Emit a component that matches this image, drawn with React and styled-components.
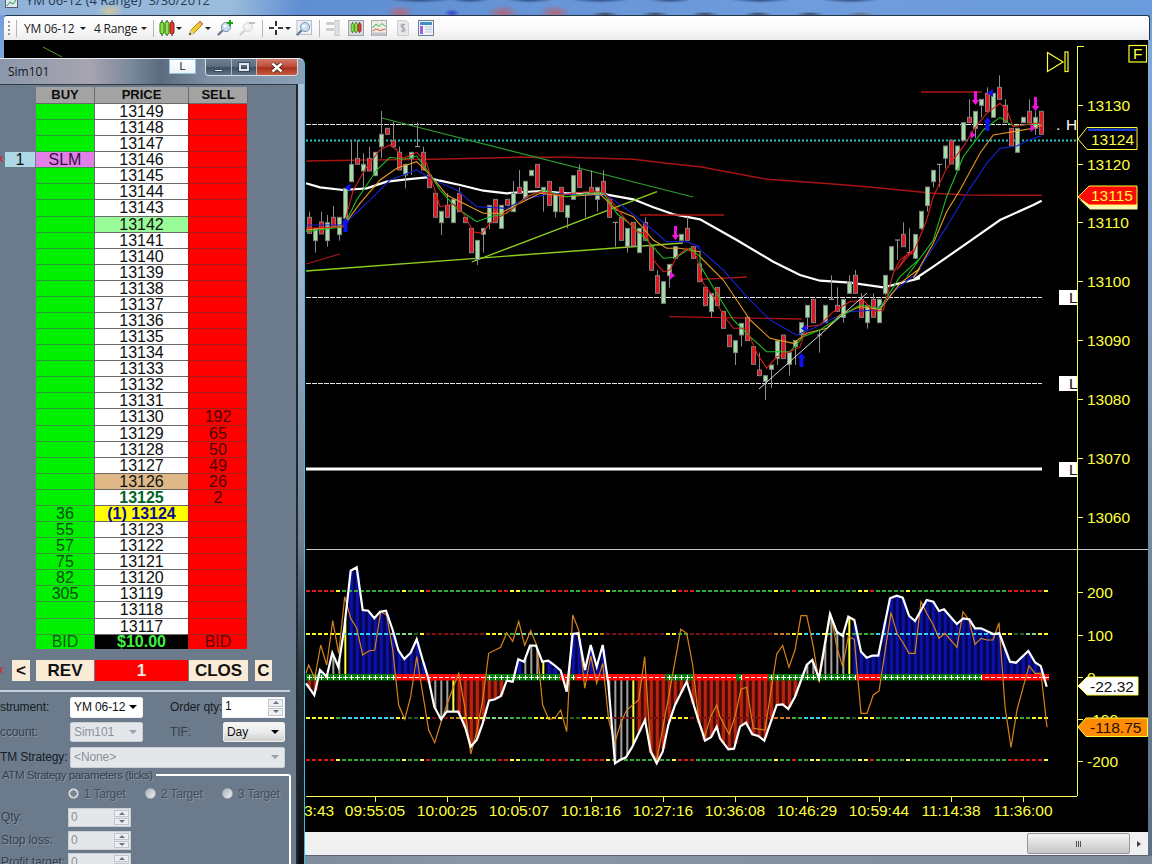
import React from 'react';
import styled, { createGlobalStyle } from 'styled-components';

const Global = createGlobalStyle`
  html, body { margin: 0; padding: 0; background: #000; }
  body { font-family: "Liberation Sans", Arial, sans-serif; }
`;

/* ---------- chart data (traced) ---------- */
const Z3 = [
  ['r',352,400,335,400],['g',386,422,386,458],['r',366,402,335,402],['g',368,422,345,440],['r',352,380,318,380],['g',352,404,352,422],
  ['g',265,355],['g',193,245,120,245],['r',175,193,120,193],['g',193,213,160,265],['r',175,213,140,213],['g',157,227,157,227],
  ['g',103,140,33,175],['r',85,103,85,103],['r',122,140,65,140],['r',157,210,140,210],['g',193,225,193,265],['g',157,175,157,225],
  ['d',140,140,67,140],['r',157,210,140,210],['r',225,263],['r',280,352],['g',334,368,334,405],['r',316,352,280,352],
  ['g',298,368],['r',280,335,262,335],['r',352,368],['r',385,458],['g',421,478,421,495],['g',385,403,385,458],
  ['g',316,368,316,388],['r',298,368],['g',316,385],['r',298,316],['g',280,335,243,335],['r',262,280,210,280],
  ['g',244,298],['g',211,227],['r',193,262],['g',262,280,262,335],['r',244,316],['g',280,335,280,352],
  ['r',262,335],['g',316,352,316,385],['g',227,298],['r',211,262,193,262],['d',280,280,280,352],['r',262,280,211,280],
  ['g',262,298,262,335],['r',244,280,211,280],['r',298,352],['d',367,367,367,440],['r',352,421],['g',385,440,385,458],
  ['r',367,437],['g',385,458],['r',367,421,352,421],['r',440,511],['r',527,580,511,580],['g',545,610],
  ['g',493,527,493,563],['g',440,475],['g',403,421],['r',385,421,350,421],['r',440,475],
];
const Z5 = [
  ['r',72,125],['r',142,197],['g',160,215,160,232],['r',142,197],['r',214,265],['r',285,320],['g',302,338,302,375],
  ['g',250,285,250,320],['r',232,302],['r',320,373],['r',390,407,338,407],['g',407,424,407,480],['g',375,388,388,444],
  ['g',302,356,302,375],['r',285,356],['g',338,373,338,407],['g',302,320,302,375],['g',248,284,248,290],['g',196,232,196,268],
  ['r',178,248],['d',285,285,270,338],['g',196,248],['d',178,178,106,178],['r',196,214,142,214],['g',178,232,178,248],
  ['g',125,160,106,160],['r',106,160,90,160],['r',178,232,160,232],['g',196,248,196,266],['r',178,232,160,232],['g',178,248],['g',106,160,106,165],
];
const Z4 = [
  ['g',620,690,620,690],['d',600,600,600,660],['r',583,620,547,620],['d',638,638,565,638],['g',583,655],['g',514,565,514,570],
  ['g',441,497,441,515],['g',391,425,391,442],['d',373,373,373,440],['g',318,355,318,385],['r',301,372],['g',318,390],
  ['g',248,301],['r',232,248,178,248],['g',214,265,214,295],['g',178,196,178,232],['r',160,214,142,214],['g',160,232],
  ['r',142,178,106,178],['r',196,247,178,247],['r',265,318],['g',265,337],['g',232,248],['r',214,248,178,248],
  ['g',232,265,214,285],['r',214,283],
];
const map3 = y => 100 + y / 3;
const map5 = y => 240 + y / 3;
const map4 = y => 40 + y / 3;
const toCandles = (rows, fy) => rows.map(([t, a, b, wt, wb]) => ({
  t, top: fy(a), bot: fy(b), wt: fy(wt === undefined ? a : wt), wb: fy(wb === undefined ? b : wb),
}));
const CANDLES = [...toCandles(Z3, map3), ...toCandles(Z5, map5), ...toCandles(Z4, map4)];
const candleX = i => 309.33 + 6 * i;

const trace = (segments) => segments.flatMap(([ox, oy, pts]) => pts.map(([x, y]) => [ox + x / 3, oy + y / 3]));
const toPath = pts => pts.map(p => `${p[0].toFixed(1)},${p[1].toFixed(1)}`).join(' ');

const SMA = trace([
  [300,100,[[18,250],[60,262],[130,270],[200,265],[260,245],[320,238],[380,232],[420,242],[480,255],[550,272],[620,280],[720,273],[800,280],[900,280],[1000,298],[1060,322],[1120,343],[1200,358]]],
  [600,240,[[410,0],[520,65],[600,105],[660,122],[750,128],[850,142],[960,115]]],
  [700,40,[[640,720],[700,680],[800,610],[900,540],[1000,495],[1025,482]]],
]);
const DARKRED = trace([
  [300,100,[[18,183],[200,180],[400,178],[650,172],[800,172],[1000,178],[1100,190],[1200,200]]],
  [700,40,[[200,418],[400,432],[500,440],[600,450],[700,460],[800,465],[1025,466]]],
]);
const MA_RED = trace([
  [300,100,[[18,385],[130,380],[160,270],[200,200],[240,150],[270,135],[290,150],[310,175],[350,157],[380,190],[395,240],[420,320],[460,312],[490,340],[520,395],[545,400],[570,370],[600,350],[640,325],[680,290],[720,275],[780,285],[820,280],[860,275],[910,275],[940,310],[970,350],[1010,395],[1040,400],[1060,480],[1090,515],[1110,510],[1130,470],[1160,445],[1190,470]]],
  [600,240,[[290,50],[310,130],[340,170],[370,225],[400,265],[440,265],[470,340],[500,385],[530,350],[560,340],[600,320],[620,260],[660,255],[700,215],[750,185],[790,180],[820,215],[850,210],[880,100],[900,60],[940,30]]],
  [700,40,[[590,690],[620,645],[640,640],[680,540],[700,470],[740,385],[790,320],[820,270],[860,220],[900,190],[920,210],[940,260],[1000,250],[1025,250]]],
]);
const MA_GREEN = trace([
  [300,100,[[18,395],[130,380],[170,300],[230,210],[270,172],[310,178],[350,168],[385,215],[420,270],[470,325],[530,365],[570,350],[620,340],[680,290],[730,270],[800,290],[860,280],[910,278],[950,340],[1000,380],[1050,430],[1090,475],[1130,472],[1170,445],[1200,470]]],
  [600,240,[[300,75],[350,160],[400,240],[450,290],[500,335],[570,335],[610,290],[660,270],[720,230],[780,195],[840,205],[900,110],[960,55]]],
  [700,40,[[620,710],[700,600],[740,470],[790,350],[850,270],[900,232],[940,258],[1025,250]]],
]);
const MA_ORANGE = trace([
  [300,100,[[18,390],[130,378],[180,310],[240,240],[290,205],[350,185],[395,230],[440,285],[500,315],[550,340],[600,340],[660,310],[720,280],[800,290],[900,282],[950,330],[1000,350],[1060,420],[1100,445],[1140,445],[1200,455]]],
  [600,240,[[300,50],[370,120],[410,180],[450,240],[510,295],[580,310],[620,280],[680,265],[720,225],[780,200],[840,208],[900,130],[960,85]]],
  [700,40,[[640,715],[700,610],[740,515],[780,450],[840,340],[880,285],[920,278],[1000,265],[1025,255]]],
]);
const MA_BLUE = trace([
  [300,100,[[18,375],[130,375],[200,310],[270,240],[350,210],[400,240],[470,270],[530,320],[620,325],[680,295],[760,280],[830,285],[920,285],[970,320],[1040,375],[1100,425],[1160,425],[1200,440]]],
  [600,240,[[290,20],[370,90],[440,170],[510,240],[590,285],[640,265],[700,235],[750,215],[830,210],[880,155],[950,100]]],
  [700,40,[[640,715],[740,560],[800,460],[860,370],[900,325],[950,318],[1000,295],[1025,288]]],
]);
const OSC = trace([
  [300,550,[[18,400],[43,435],[60,360],[80,380],[97,308],[115,350],[132,240],[152,62],[170,52],[188,180],[205,182],[223,205],[240,185],[258,182],[278,240],[295,300],[313,327],[332,308],[350,268],[368,330],[385,385],[403,470],[423,508],[440,485],[475,485],[495,530],[512,590],[530,570],[548,520],[567,452],[585,448],[603,438],[620,392],[638,395],[655,328],[672,335],[690,287],[708,287],[727,335],[745,332],[763,345],[782,362],[800,425],[818,252],[835,250],[855,360],[872,285],[890,350],[908,285],[925,400],[945,640],[960,630],[978,622],[997,590],[1035,510],[1052,605],[1070,640],[1088,605],[1105,525],[1125,465],[1160,395],[1195,510],[1215,572],[1233,562],[1250,530]]],
  [720,550,[[0,565],[25,598],[42,596],[60,530],[78,518],[97,553],[115,558],[133,572],[170,465],[188,463],[205,477],[225,440],[260,345],[277,330],[297,385],[330,192],[350,245],[368,258],[385,200],[403,210],[423,305],[440,323],[457,317],[475,317],[510,145],[530,137],[548,143],[567,197],[585,213],[620,150],[640,155],[657,183],[672,178],[710,222],[730,205],[748,208],[765,235],[783,235],[820,252],[838,250],[870,335],[888,338],[925,303],[945,337],[962,348],[980,410]]],
]);
const OSC_SLOW = trace([
  [300,550,[[18,370],[26,345],[44,385],[62,285],[80,345],[98,212],[116,310],[134,140],[152,205],[170,235],[188,315],[206,303],[224,300],[242,185],[260,195],[278,300],[296,465],[314,508],[332,440],[350,320],[368,430],[386,540],[404,578],[422,520],[440,465],[476,370],[494,470],[512,612],[530,545],[548,450],[566,310],[602,292],[620,248],[638,274],[656,214],[674,286],[692,242],[710,286],[728,465],[746,508],[764,505],[782,480],[800,545],[818,195],[836,240],[854,415],[872,318],[890,400],[908,340],[926,510],[944,580],[962,520],[980,480],[1016,450],[1034,320],[1052,600],[1070,630],[1106,440],[1142,238],[1160,250],[1178,345],[1196,510],[1214,560],[1232,500],[1250,465]]],
  [720,550,[[0,500],[27,553],[45,500],[63,418],[80,412],[100,535],[135,540],[170,312],[188,287],[207,352],[225,300],[243,197],[260,197],[280,290],[297,397],[332,190],[350,290],[368,350],[385,260],[403,268],[423,490],[441,490],[460,435],[477,423],[513,188],[531,250],[549,278],[567,310],[585,310],[603,155],[620,190],[640,225],[657,265],[675,250],[711,292],[729,185],[747,210],[765,283],[783,265],[801,270],[819,270],[837,218],[855,470],[873,592],[891,480],[927,347],[945,370],[963,370],[981,532]]],
]);
const interpY = (pts, x) => {
  for (let i = 1; i < pts.length; i++) {
    if (x <= pts[i][0]) {
      const [x0, y0] = pts[i - 1]; const [x1, y1] = pts[i];
      return y0 + (y1 - y0) * ((x - x0) / (x1 - x0 || 1));
    }
  }
  return pts[pts.length - 1][1];
};
const ZONES = [[306,327,'red'],[327,340,'gray'],[340,348,'yellow'],[348,430,'blue'],[430,450,'gray'],[450,455,'yellow'],[455,520,'red'],[520,540,'gray'],[540,545,'yellow'],[545,608,'blue'],[608,630,'gray'],[630,635,'yellow'],[635,806,'red'],[806,847,'gray'],[847,851,'yellow'],[851,1046,'blue']];
const BAR = {
  red: { c: '#b8250f', back: '#4d0d06', w: 3 }, blue: { c: '#0c12a8', back: '#04065a', w: 3 },
  gray: { c: '#a0a0a0', back: 'none', w: 2 }, yellow: { c: '#ffff40', back: 'none', w: 2 },
};
const ZERO_Y = 677;
const BARS = [];
for (let i = 0; i <= 123; i++) {
  const x = candleX(i);
  const z = ZONES.find(r => x >= r[0] && x < r[1]);
  if (!z) continue;
  const y = interpY(OSC, x);
  let kind = z[2];
  if (kind === 'blue' && y > ZERO_Y) kind = 'red';
  if (kind === 'red' && y < ZERO_Y) kind = 'blue';
  BARS.push({ x, y, kind });
}

const C = { dr: '#7a1010', r: '#d81c1c', y: '#ffff30', g: '#2fae3a', lg: '#7fd88a', dg: '#1c5f20', c: '#38d0e8', o: '#d07a20' };
const RUN200 = [[335,'r'],[341,'y'],[402,'g'],[408,'y'],[420,'g'],[426,'y'],[431,'r'],[498,'g'],[510,'r'],[522,'y'],[545,'g'],[570,'r'],[582,'g'],[606,'r'],[612,'y'],[672,'g'],[678,'y'],[696,'r'],[774,'g'],[780,'y'],[792,'g'],[797,'r'],[810,'g'],[822,'y'],[858,'g'],[870,'y'],[876,'r'],[906,'g'],[912,'y'],[1007,'g'],[1044,'r'],[1050,'y']];
const RUN100 = [[342,'y'],[390,'c'],[413,'lg'],[418,'dg'],[425,'y'],[485,'dr'],[500,'y'],[512,'g'],[540,'lg'],[600,'y'],[605,'o'],[666,'dr'],[676,'y'],[686,'g'],[774,'dr'],[792,'o'],[803,'y'],[817,'c'],[826,'y'],[844,'lg'],[851,'y'],[876,'g'],[1000,'c'],[1013,'y'],[1025,'dg'],[1036,'lg'],[1050,'y']];
const RUN100N = [[335,'y'],[342,'g'],[395,'c'],[407,'y'],[418,'dg'],[428,'y'],[450,'dr'],[460,'o'],[485,'y'],[508,'lg'],[533,'g'],[563,'y'],[577,'dg'],[607,'y'],[667,'dr'],[690,'y'],[774,'dr'],[792,'o'],[803,'g'],[817,'c'],[827,'y'],[850,'g'],[858,'dg'],[873,'y'],[900,'g'],[1007,'c'],[1015,'y'],[1027,'g'],[1050,'y']];
const ZERO_RUNS = [[306,395,'g'],[395,485,'r'],[485,560,'g'],[560,567,'r'],[567,575,'g'],[575,665,'r'],[665,693,'g'],[693,736,'r'],[736,742,'g'],[742,768,'r'],[768,856,'g'],[856,880,'r'],[880,982,'g'],[982,1049,'r']];

const PRICE_TICKS = [[13130,105],[13120,164],[13110,222],[13100,281],[13090,340],[13080,399],[13070,458],[13060,517]];
const OSC_TICKS = [['200',592],['100',635],['0',677],['-100',719],['-200',761]];
const TIME_TICKS = [['09:55:05',375],['10:00:25',447],['10:05:07',519],['10:18:16',591],['10:27:16',663],['10:36:08',735],['10:46:29',807],['10:59:44',879],['11:14:38',951],['11:36:00',1023]];

/* ---------- chart drawing ---------- */
const ChartText = styled.text`
  font-family: "Liberation Sans", Arial, sans-serif;
  font-size: 15.5px;
  fill: ${p => p.$fill || '#ffff3c'};
`;
const DashRuns = ({ y, runs }) => {
  const out = [];
  for (let x = 306; x < 1048; x += 6) {
    const r = runs.find(q => x < q[0]);
    if (r) out.push(<rect key={x} x={x} y={y - 1} width={4} height={2} fill={C[r[1]]} />);
  }
  return <g>{out}</g>;
};
const DownArrow = ({ x, y, color }) => (
  <polygon points={`${x-1.5},${y} ${x+1.5},${y} ${x+1.5},${y+9} ${x+4},${y+9} ${x},${y+14} ${x-4},${y+9} ${x-1.5},${y+9}`} fill={color} />
);
const UpArrow = ({ x, y, color }) => (
  <polygon points={`${x},${y} ${x+4},${y+5} ${x+2},${y+5} ${x+2},${y+14} ${x-2},${y+14} ${x-2},${y+5} ${x-4},${y+5}`} fill={color} />
);
const TriRight = ({ x, y, color }) => <polygon points={`${x-2},${y-4} ${x+3},${y} ${x-2},${y+4}`} fill={color} />;
const TriLeft = ({ x, y, color }) => <polygon points={`${x+3},${y-4} ${x-3},${y} ${x+3},${y+4}`} fill={color} />;

const ChartSvg = styled.svg`
  display: block;
  width: 1144px;
  height: 792px;
  background: #000;
`;

const Chart = () => (
  <ChartSvg viewBox="4 40 1144 792">
    <line x1="43" y1="47" x2="62" y2="57" stroke="#4f9a1e" />
    {/* horizontal levels */}
    <line x1="306" y1="124.5" x2="1042" y2="124.5" stroke="#e6e6e6" strokeDasharray="5 1" />
    <line x1="306" y1="297.5" x2="1042" y2="297.5" stroke="#e6e6e6" strokeDasharray="5 1" />
    <line x1="306" y1="383.5" x2="1042" y2="383.5" stroke="#e6e6e6" strokeDasharray="5 1" />
    <line x1="306" y1="469" x2="1042" y2="469" stroke="#fff" strokeWidth="3" />
    <line x1="306" y1="140.5" x2="1077" y2="140.5" stroke="#25c8c8" strokeWidth="2" strokeDasharray="2 2" />
    {/* averages behind */}
    <polyline points={toPath(DARKRED)} fill="none" stroke="#a81414" strokeWidth="1.4" />
    <polyline points={toPath(SMA)} fill="none" stroke="#fff" strokeWidth="2.2" />
    {/* drawn objects */}
    <line x1="381.7" y1="118" x2="693" y2="197" stroke="#2d9c2d" strokeWidth="1.2" />
    <line x1="306" y1="271" x2="683" y2="243" stroke="#8fce1e" strokeWidth="1.3" />
    <line x1="471.7" y1="262" x2="657" y2="191.7" stroke="#8fce1e" strokeWidth="1.3" />
    <line x1="306" y1="264" x2="340" y2="254" stroke="#a81414" strokeWidth="1.3" />
    <line x1="640" y1="215" x2="724" y2="215" stroke="#b01414" strokeWidth="1.3" />
    <line x1="701.7" y1="279.3" x2="747" y2="277" stroke="#b01414" strokeWidth="1.3" />
    <line x1="669" y1="316.7" x2="802" y2="319" stroke="#b01414" strokeWidth="1.3" />
    <line x1="921" y1="92" x2="982" y2="92" stroke="#b01414" strokeWidth="1.3" />
    {/* candles */}
    {CANDLES.map((c, i) => {
      const x = Math.round(candleX(i));
      return (
        <g key={i}>
          <line x1={x + .5} y1={c.wt} x2={x + .5} y2={c.wb} stroke="#8a8a8a" />
          {c.t === 'd'
            ? <line x1={x - 2} y1={c.top} x2={x + 3} y2={c.top} stroke="#b0b0b0" />
            : <rect x={x - 1.5} y={c.top} width={4} height={c.bot - c.top} fill={c.t === 'g' ? '#a4dea4' : '#e2161c'} stroke="#7f7f7f" strokeWidth="1" />}
        </g>
      );
    })}
    <polyline points={toPath(MA_BLUE)} fill="none" stroke="#1420c8" strokeWidth="1.2" />
    <polyline points={toPath(MA_ORANGE)} fill="none" stroke="#e89a20" strokeWidth="1.1" />
    <polyline points={toPath(MA_GREEN)} fill="none" stroke="#1ebe1e" strokeWidth="1.1" />
    <polyline points={toPath(MA_RED)} fill="none" stroke="#d81e1e" strokeWidth="1.1" />
    <line x1="759" y1="389" x2="867" y2="293" stroke="#d8d8d8" strokeWidth="1" />
    {/* markers */}
    <UpArrow x={345.5} y={218} color="#1010f0" />
    <TriLeft x={347.5} y={187.5} color="#1010f0" />
    <DownArrow x={675.5} y={226} color="#f010e0" />
    <TriRight x={672} y={275.5} color="#f010e0" />
    <UpArrow x={801.5} y={353} color="#1010f0" />
    <TriLeft x={804} y={328.5} color="#1010f0" />
    <DownArrow x={975.5} y={91} color="#f010e0" />
    <DownArrow x={1035.5} y={97} color="#f010e0" />
    <UpArrow x={987.5} y={117} color="#1010f0" />
    <TriLeft x={990} y={93} color="#1010f0" />
    <TriRight x={972.5} y={135} color="#f010e0" />
    <TriRight x={1032.5} y={128} color="#f010e0" />
    {/* replay + F box */}
    <polygon points="1047.5,52.5 1063,62 1047.5,71.5" fill="none" stroke="#ffff30" strokeWidth="1.2" />
    <rect x="1065" y="52" width="3" height="19.5" fill="none" stroke="#ffff30" strokeWidth="1.2" />
    <rect x="1129" y="45.5" width="17.5" height="16.5" fill="none" stroke="#ffff30" strokeWidth="1.2" />
    <ChartText x="1133" y="59">F</ChartText>
    {/* price axis */}
    <line x1="1077.5" y1="46" x2="1077.5" y2="796" stroke="#ffff50" />
    <line x1="1077" y1="46.5" x2="1084" y2="46.5" stroke="#ffff50" />
    {PRICE_TICKS.map(([v, y]) => (
      <g key={v}>
        <line x1="1077" y1={y + .5} x2="1083" y2={y + .5} stroke="#ffff50" />
        <ChartText x="1087" y={y + 5.5}>{v}</ChartText>
      </g>
    ))}
    {/* level tags */}
    <ChartText x="1056" y="130" $fill="#fff">.</ChartText>
    <ChartText x="1066" y="130" $fill="#fff">H</ChartText>
    {[290, 376, 462].map(y => (
      <g key={y}>
        <rect x="1059" y={y} width="18" height="15" fill="#fff" />
        <ChartText x="1069" y={y + 13} $fill="#111">L</ChartText>
      </g>
    ))}
    {/* price flags */}
    <polygon points="1078,139 1087,127.5 1137,127.5 1137,149.5 1087,149.5" fill="#000" stroke="#ffff40" />
    <rect x="1088" y="128.5" width="48" height="2.5" fill="#1c3cd0" />
    <ChartText x="1091" y="145">13124</ChartText>
    <polygon points="1079,199 1090,209.5 1137.5,209.5 1137.5,204 1090,204" fill="#fdf8b0" />
    <polygon points="1078,197 1089,186 1137,186 1137,205 1089,205" fill="#ff0808" stroke="#ffff40" />
    <ChartText x="1091" y="201">13115</ChartText>
    {/* pane divider */}
    <line x1="306" y1="549.5" x2="1148" y2="549.5" stroke="#c8c8c8" />
    {/* oscillator */}
    {BARS.map((b, i) => {
      const s = BAR[b.kind];
      const top = Math.min(b.y, ZERO_Y); const h = Math.abs(b.y - ZERO_Y);
      return (
        <g key={i}>
          {s.back !== 'none' && <rect x={b.x - 3} y={top} width={6} height={h} fill={s.back} />}
          <rect x={b.x - s.w / 2} y={top} width={s.w} height={h} fill={s.c} />
        </g>
      );
    })}
    <DashRuns y={591} runs={RUN200} />
    <DashRuns y={634} runs={RUN100} />
    <DashRuns y={718} runs={RUN100N} />
    <DashRuns y={760} runs={RUN200} />
    {ZERO_RUNS.map(([a, b, k]) => {
      const marks = [];
      for (let x = 306; x < b; x += 6) {
        if (x < a) continue;
        marks.push(k === 'g'
          ? <path key={x} d={`M${x + 1} 677.5H${x + 6}M${x + 3.5} 675V680`} stroke="#fff" strokeWidth="1" fill="none" />
          : <line key={x} x1={x + 1} y1="677.5" x2={x + 5} y2="677.5" stroke="#fff" />);
      }
      return (
        <g key={a}>
          <rect x={a} y="674" width={b - a} height="6.5" fill={k === 'g' ? '#0a7a0a' : '#ff0606'} />
          {marks}
        </g>
      );
    })}
    <polyline points={toPath(OSC_SLOW)} fill="none" stroke="#d9821a" strokeWidth="1.2" />
    <polyline points={toPath(OSC)} fill="none" stroke="#fff" strokeWidth="2.2" />
    {OSC_TICKS.map(([v, y]) => (
      <g key={v}>
        <line x1="1077" y1={y + .5} x2="1083" y2={y + .5} stroke="#ffff50" />
        <ChartText x="1087" y={y + 5.5}>{v}</ChartText>
      </g>
    ))}
    <polygon points="1078,686 1087,677 1138,677 1138,695 1087,695" fill="#fff" stroke="#ffff40" />
    <ChartText x="1090" y="691.5" $fill="#111">-22.32</ChartText>
    <polygon points="1078,727 1086,718 1147.5,718 1147.5,736.5 1086,736.5" fill="#ff8c00" stroke="#ffff40" />
    <ChartText x="1090" y="732.5" $fill="#1c1000">-118.75</ChartText>
    {/* time axis */}
    <line x1="306" y1="796.5" x2="1077" y2="796.5" stroke="#ffff50" />
    <ChartText x="304" y="816">3:43</ChartText>
    {TIME_TICKS.map(([t, x]) => (
      <g key={t}>
        <line x1={x + .5} y1="796" x2={x + .5} y2="802" stroke="#ffff50" />
        <ChartText x={x} y="816" textAnchor="middle">{t}</ChartText>
      </g>
    ))}
  </ChartSvg>
);

/* ---------- page frame ---------- */
const Page = styled.div`
  width: 1152px;
  height: 864px;
  position: relative;
  overflow: hidden;
  display: grid;
  grid-template-rows: 15px 25px 792px 24px 8px;
  background: linear-gradient(#6f9bd6, #7fa8de 60px, #7f96b0 400px, #5d6e80);
`;
const TitleBar = styled.div`
  display: flex;
  align-items: flex-start;
  gap: 8px;
  padding-left: 5px;
  overflow: hidden;
  background:
    radial-gradient(ellipse 34px 3px at 420px 0, #2f4f84, transparent),
    radial-gradient(ellipse 20px 3px at 470px 0, #2f4f84, transparent),
    radial-gradient(ellipse 24px 3px at 530px 0, #2f4f84, transparent),
    radial-gradient(ellipse 30px 3px at 600px 0, #2f4f84, transparent),
    radial-gradient(ellipse 22px 3px at 670px 0, #2f4f84, transparent),
    radial-gradient(ellipse 30px 3px at 760px 0, #2f4f84, transparent),
    radial-gradient(ellipse 30px 3px at 850px 0, #2f4f84, transparent),
    radial-gradient(ellipse 14px 8px at 400px 13px, #b06878, transparent),
    radial-gradient(ellipse 16px 8px at 503px 13px, #b06878, transparent),
    radial-gradient(ellipse 16px 8px at 555px 13px, #b06878, transparent),
    radial-gradient(ellipse 8px 4px at 452px 13px, #3040d0, transparent),
    radial-gradient(ellipse 14px 2px at 605px 14px, #3a4658, transparent),
    radial-gradient(ellipse 14px 2px at 655px 14px, #3a4658, transparent),
    radial-gradient(ellipse 14px 2px at 705px 14px, #3a4658, transparent),
    radial-gradient(ellipse 14px 2px at 758px 14px, #3a4658, transparent),
    radial-gradient(ellipse 14px 2px at 810px 14px, #3a4658, transparent),
    radial-gradient(ellipse 14px 2px at 860px 14px, #66707e, transparent),
    radial-gradient(ellipse 14px 8px at 110px 11px, #d0c8a0, transparent),
    linear-gradient(90deg, #8fb0d8 0, #9cbcdc 230px, #5f8ed2 300px, #6f9cdc 800px, #6a9bdc 100%),
    #6f9cd8;
`;
const TitleIcon = styled.svg`
  width: 13px;
  height: 8px;
  flex: none;
`;
const TitleText = styled.span`
  font-family: "Open Sans", sans-serif;
  font-size: 13px;
  line-height: 14px;
  margin-top: -7px;
  color: #25384e;
  white-space: pre;
`;
const ToolbarRow = styled.div`
  margin: 0 2px 0 4px;
  display: flex;
  align-items: center;
  background: linear-gradient(#ffffff, #fafafa 50%, #ececec);
  border-top: 1px solid #26364a;
  border-right: 1px solid #26364a;
  border-radius: 3px 3px 0 0;
  box-sizing: border-box;
`;
const Grip = styled.span`
  width: 2px;
  height: 15px;
  margin-left: 4px;
  background: repeating-linear-gradient(#9a9a9a 0 2px, transparent 2px 4px);
`;
const Sep = styled.span`
  width: 1px;
  height: 17px;
  background: #b5b5b5;
  margin-left: ${p => p.$ml}px;
`;
const ToolText = styled.span`
  font-family: "Open Sans", sans-serif;
  font-size: 12px;
  letter-spacing: -0.2px;
  color: #1b1b1b;
  margin-left: ${p => p.$ml}px;
  width: ${p => p.$w}px;
  white-space: nowrap;
`;
const Caret = styled.span`
  width: 0;
  height: 0;
  margin-left: ${p => p.$ml}px;
  border: 3px solid transparent;
  border-top: 3px solid #222;
  border-bottom: 0;
`;
const ToolIcon = styled.svg`
  width: ${p => p.$w || 16}px;
  height: 16px;
  margin-left: ${p => p.$ml}px;
  flex: none;
`;
const ChartRow = styled.div`
  padding: 0 4px;
`;
const ScrollRow = styled.div`
  margin: 0 4px;
  display: flex;
  align-items: stretch;
  justify-content: flex-end;
  background: #f0f0f0;
  border-bottom: 1px solid #5a6470;
  box-sizing: border-box;
`;
const ScrollThumb = styled.div`
  width: 103px;
  margin: 1px 0;
  box-sizing: border-box;
  border: 1px solid #9a9a9a;
  border-radius: 2px;
  background: linear-gradient(#f4f4f4, #dcdcdc 50%, #c6c6c6);
  display: flex;
  align-items: center;
  justify-content: center;
  gap: 1px;
`;
const ThumbMark = styled.span`
  width: 1px;
  height: 6px;
  background: #555;
`;
const ScrollArrow = styled.div`
  width: 18px;
  display: flex;
  align-items: center;
  justify-content: center;
  &::before {
    content: "";
    border: 3px solid transparent;
    border-left: 4px solid #444;
    border-right: 0;
  }
`;
const BottomFrame = styled.div`
  background: linear-gradient(90deg, #6d7a88, #8a96a6 40%, #7f8c9c);
`;

/* ---------- floating DOM window ---------- */
const DomWindow = styled.div`
  position: absolute;
  left: 0;
  top: 58px;
  width: 305px;
  height: 806px;
  box-sizing: border-box;
  border-top: 1px solid #e8eef4;
  border-radius: 0 6px 0 0;
  border-right: 1px solid #30c0e0;
  overflow: hidden;
  display: flex;
  flex-direction: column;
  background: linear-gradient(#aac4dc, #9eb6cc 200px, #6f8092 480px, #28323c 620px, #0c0f14);
`;
const WinTitle = styled.div`
  height: 25px;
  flex: none;
  display: flex;
  align-items: flex-start;
  background: linear-gradient(90deg, #8a98aa 0, #a8a4b0 90px, #7a8a9c 130px, #5c6c7e 160px, #7e90a4 210px, #8aa0b6);
`;
const WinName = styled.span`
  font-family: "Open Sans", sans-serif;
  font-size: 12px;
  line-height: 14px;
  color: #10181f;
  margin: 6px 0 0 8px;
`;
const TagButton = styled.div`
  width: 27px;
  height: 15px;
  margin: 0 0 0 auto;
  box-sizing: border-box;
  border: 1px solid #8fc4ea;
  background: linear-gradient(#fff, #eef2f6);
  font-size: 11px;
  line-height: 13px;
  text-align: center;
  color: #222;
`;
const Caption = styled.div`
  display: flex;
  height: 17px;
  margin: 0 6px 0 9px;
  width: 93px;
  flex: none;
  box-sizing: border-box;
  border: 1px solid #d4dce4;
  border-top: 0;
  border-radius: 0 0 4px 4px;
  overflow: hidden;
`;
const CapBtn = styled.div`
  flex: ${p => p.$w} 0 0;
  display: flex;
  align-items: center;
  justify-content: center;
  border-right: 1px solid #b0bcc8;
  background: ${p => p.$close
    ? 'linear-gradient(#d0786a, #c0503c 45%, #a8301c 55%, #c85a40)'
    : 'linear-gradient(#6e8092, #5c6e80 45%, #3e4e5e 55%, #60748a)'};
  &:last-child { border-right: 0; }
`;
const MinGlyph = styled.span`
  width: 9px;
  height: 3px;
  margin-top: 6px;
  background: #eef2f6;
  border: 1px solid #384858;
  box-sizing: border-box;
`;
const MaxGlyph = styled.span`
  width: 10px;
  height: 8px;
  box-sizing: border-box;
  border: 2px solid #dfe6ec;
  box-shadow: 0 0 0 1px #384858;
`;
const CloseGlyph = styled.svg`
  width: 14px;
  height: 11px;
`;
const WinBody = styled.div`
  width: 298px;
  flex: 1;
  box-sizing: border-box;
  border-top: 1px solid #2e3a46;
  border-right: 2px solid #20282f;
  background: #6c7b8b;
  padding-top: 2px;
  overflow: hidden;
`;
const LadderWrap = styled.div`
  display: flex;
`;
const SideCol = styled.div`
  width: 36px;
  flex: none;
  display: grid;
  grid-template-rows: 16px repeat(33, 15.09px);
  row-gap: 1px;
  align-content: start;
`;
const WorkingQty = styled.div`
  grid-row: 5;
  display: flex;
  font-size: 16px;
  line-height: 14px;
  color: #111;
`;
const RedMark = styled.span`
  width: 5px;
  overflow: hidden;
  color: #d01c2c;
  font-size: 14px;
  line-height: ${p => p.$lh || 15}px;
  text-indent: -4px;
`;
const QtyCell = styled.span`
  width: 30px;
  padding-top: 1px;
  background: #add8e6;
  text-align: center;
`;
const Ladder = styled.div`
  display: grid;
  grid-template-columns: 58px 93px 58px;
  grid-template-rows: 16px repeat(33, 15.09px) 14px;
  gap: 1px;
  background: linear-gradient(90deg, #2f9c35 0 58px, #6a6a6a 58px 151px, #a81c1c 151px);
`;
const HeadCell = styled.div`
  background: #a3a3a3;
  box-shadow: 0 1px 0 #6a6a6a, 1px 0 0 #6a6a6a;
  font-size: 13px;
  font-weight: bold;
  line-height: 15px;
  text-align: center;
  color: #0c0c0c;
`;
const Cell = styled.div`
  box-sizing: border-box;
  padding-top: ${p => (p.$foot ? 0 : 1)}px;
  background: ${p => p.$bg};
  color: ${p => p.$fg || '#101010'};
  font-size: 16px;
  font-weight: ${p => (p.$bold ? 'bold' : 'normal')};
  line-height: 14px;
  text-align: center;
  white-space: nowrap;
`;
const ActionRow = styled.div`
  display: flex;
  height: 21px;
  margin-top: 11px;
`;
const ActionBtn = styled.div`
  width: ${p => p.$w}px;
  margin-left: ${p => p.$ml || 0}px;
  background: ${p => p.$bg || '#faebd7'};
  color: ${p => p.$fg || '#111'};
  font-size: 17px;
  font-weight: bold;
  line-height: 21px;
  text-align: center;
`;
const Divider = styled.div`
  height: 2px;
  width: 290px;
  margin-top: 9px;
  background: #c9d0d8;
`;
const FormRow = styled.div`
  display: flex;
  align-items: center;
  height: ${p => p.$h}px;
  margin-top: ${p => p.$mt}px;
  font-size: 12px;
  letter-spacing: -0.1px;
  color: ${p => (p.$dim ? '#333f4c' : '#141c24')};
`;
const FieldLabel = styled.span`
  width: ${p => p.$w}px;
  margin-left: ${p => p.$ml || 0}px;
  flex: none;
  white-space: nowrap;
  text-shadow: ${p => (p.$etched ? '1px 1px 0 #8996a5' : 'none')};
`;
const Combo = styled.div`
  width: ${p => p.$w}px;
  flex: none;
  height: 100%;
  box-sizing: border-box;
  display: flex;
  align-items: center;
  justify-content: space-between;
  padding: 0 5px 0 3px;
  border: 1px solid ${p => (p.$off ? '#c9ced4' : '#f0f0f0')};
  border-radius: 2px;
  font-size: 12px;
  background: ${p => (p.$off ? '#e4e7ea' : p.$glass ? 'linear-gradient(#f6f6f6, #ececec 50%, #cfcfcf)' : '#fff')};
  color: ${p => (p.$off ? '#8a929a' : '#111')};
  &::after {
    content: "";
    border: 4px solid transparent;
    border-top: 4px solid ${p => (p.$off ? '#9aa0a6' : '#000')};
    border-bottom: 0;
  }
`;
const Spin = styled.div`
  width: ${p => p.$w}px;
  height: 100%;
  flex: none;
  box-sizing: border-box;
  display: flex;
  justify-content: space-between;
  padding: 1px 1px 1px 2px;
  font-size: 12px;
  line-height: 14px;
  border: 1px solid ${p => (p.$off ? '#c9ced4' : '#eef0f2')};
  background: ${p => (p.$off ? '#e4e7ea' : '#fff')};
  color: ${p => (p.$off ? '#8a929a' : '#111')};
`;
const SpinBtns = styled.div`
  width: 15px;
  display: flex;
  flex-direction: column;
  gap: 1px;
`;
const SpinBtn = styled.div`
  flex: 1;
  display: flex;
  align-items: center;
  justify-content: center;
  background: #eceff3;
  border: 1px solid #c0c6cc;
  &::after {
    content: "";
    border: 3px solid transparent;
    ${p => (p.$up
      ? 'border-bottom: 3px solid #6a7480; border-top: 0;'
      : 'border-top: 3px solid #6a7480; border-bottom: 0;')}
  }
`;
const LegendRow = styled.div`
  display: flex;
  width: 291px;
  margin-top: 1px;
  height: 12px;
`;
const LegendText = styled.span`
  font-size: 11.5px;
  letter-spacing: -0.45px;
  line-height: 12px;
  color: #333f4c;
  padding-left: 2px;
  white-space: nowrap;
  text-shadow: 1px 1px 0 #8996a5;
`;
const LegendRule = styled.span`
  flex: 1;
  margin: 5px 0 0 3px;
  box-sizing: border-box;
  border-top: 2px solid #fff;
  border-right: 2px solid #fff;
  border-radius: 0 3px 0 0;
`;
const ParamsBody = styled.div`
  width: 291px;
  box-sizing: border-box;
  border-right: 2px solid #fff;
  padding: 6px 0 20px 1px;
`;
const RadioRow = styled.div`
  display: grid;
  grid-template-columns: 77px 77px 77px;
  padding-left: 67px;
  height: 14px;
`;
const RadioItem = styled.div`
  display: flex;
  align-items: center;
  gap: 5px;
  font-size: 12px;
  letter-spacing: -0.2px;
  color: #414e5c;
  text-shadow: 1px 1px 0 #8996a5;
  white-space: nowrap;
`;
const RadioDot = styled.span`
  width: 11px;
  height: 11px;
  border-radius: 50%;
  box-sizing: border-box;
  border: 1px solid #a8b0b8;
  background: ${p => (p.$on
    ? 'radial-gradient(circle, #7a848e 0 3px, #dfe3e7 3.5px)'
    : 'linear-gradient(135deg, #aab2ba, #eef0f2)')};
`;

/* ---------- toolbar icons ---------- */
const CandlesGlyph = () => (
  <g>
    <path d="M3 0v16M8 0v16M13 0v16" stroke="#333" />
    <rect x="1" y="2" width="4" height="12" rx="2" fill="#8de04a" stroke="#2d7a10" />
    <rect x="6" y="1.5" width="4" height="13" rx="2" fill="#8de04a" stroke="#2d7a10" />
    <rect x="11" y="2" width="4" height="12" rx="2" fill="#e04030" stroke="#8a1a10" />
  </g>
);
const Magnifier = ({ dim }) => (
  <g opacity={dim ? 0.45 : 1}>
    <path d="M6 10 L1.5 14.5" stroke={dim ? '#aaa' : '#6c7c90'} strokeWidth="2.4" strokeLinecap="round" />
    <circle cx="9" cy="7" r="4.6" fill={dim ? '#dde2e8' : '#c6dcf2'} stroke={dim ? '#aaa' : '#7f93a8'} />
    <circle cx="8" cy="6" r="1.6" fill="#fff" />
  </g>
);

const Toolbar = () => (
  <ToolbarRow>
    <Grip />
    <Sep $ml={6} />
    <ToolText $ml={7} $w={50}>YM 06-12</ToolText>
    <Caret $ml={6} />
    <ToolText $ml={8} $w={42}>4 Range</ToolText>
    <Caret $ml={5} />
    <Sep $ml={6} />
    <ToolIcon $ml={5} viewBox="0 0 16 16"><CandlesGlyph /></ToolIcon>
    <Caret $ml={1} />
    <ToolIcon $ml={6} viewBox="0 0 16 16">
      <path d="M1 15 L3 10 L12 1 L15 4 L6 13 Z" fill="#f2c92e" stroke="#b08a10" />
      <path d="M1 15 L3 10 L6 13 Z" fill="#e8d8b0" />
      <path d="M1 15 L2 12.6 L3.4 14 Z" fill="#333" />
      <path d="M11 2 L14 5" stroke="#e89088" strokeWidth="2" />
    </ToolIcon>
    <Caret $ml={1} />
    <ToolIcon $ml={6} viewBox="0 0 16 16">
      <Magnifier />
      <path d="M13 0v6M10 3h6" stroke="#18a018" strokeWidth="2" />
    </ToolIcon>
    <ToolIcon $ml={6} viewBox="0 0 16 16">
      <Magnifier dim />
      <path d="M10 3h6" stroke="#b4b4b4" strokeWidth="1.6" />
    </ToolIcon>
    <Sep $ml={7} />
    <ToolIcon $ml={5} viewBox="0 0 16 16">
      <path d="M8 1v5M8 10v5M1 8h5M10 8h5" stroke="#000" strokeWidth="1.6" />
    </ToolIcon>
    <Caret $ml={1} />
    <ToolIcon $ml={5} viewBox="0 0 16 16">
      <rect x="1" y="0.5" width="14.5" height="14" fill="#eef2f6" stroke="#b4bcc6" />
      <Magnifier />
    </ToolIcon>
    <Sep $ml={7} />
    <ToolIcon $ml={5} viewBox="0 0 16 16">
      <rect x="1" y="2" width="8" height="3" rx="1" fill="#c8ccd0" />
      <rect x="1" y="8" width="8" height="3" rx="1" fill="#c8ccd0" />
      <rect x="10" y="0.5" width="4" height="15" fill="#e0e2e4" stroke="#c4c8cc" />
    </ToolIcon>
    <ToolIcon $ml={7} viewBox="0 0 16 16">
      <rect x="0.5" y="0.5" width="15" height="15" fill="#d8dce2" stroke="#9aa2ac" />
      <g transform="translate(2.5 2) scale(.7)"><CandlesGlyph /></g>
    </ToolIcon>
    <ToolIcon $ml={7} viewBox="0 0 16 16">
      <rect x="0.5" y="0.5" width="15" height="15" fill="#f0ece4" stroke="#a8acb2" />
      <path d="M1.5 8 L5 4 L8 6.5 L11 3.5 L14.5 6.5" fill="none" stroke="#3cae5a" />
      <path d="M1.5 11 L5 9 L9 10.5 L14.5 9" fill="none" stroke="#d05a48" />
      <rect x="1" y="12.5" width="14" height="3" fill="#c0c4ca" />
    </ToolIcon>
    <ToolIcon $ml={10} $w={12} viewBox="0 0 12 16">
      <path d="M0.5 0.5H9L11.5 3V15.5H0.5Z" fill="#e6e8ea" stroke="#ccd0d4" />
      <path d="M8 5.2C7 4 4 4 4 6c0 2 4 1.5 4 3.6 0 1.9-3 2-4 .8M6 3.4v9" fill="none" stroke="#a4a8ac" strokeWidth="1.2" />
    </ToolIcon>
    <ToolIcon $ml={9} viewBox="0 0 16 16">
      <rect x="0.5" y="0.5" width="15" height="15" fill="#f0f4fa" stroke="#6a7c98" />
      <rect x="2" y="2" width="12" height="3" fill="#3e8fc4" />
      <rect x="2" y="6" width="3" height="8" fill="#a060e0" />
      <path d="M7 7h7M7 9.5h7M7 12h7" stroke="#b8c4d4" />
    </ToolIcon>
  </ToolbarRow>
);

/* ---------- ladder data ---------- */
const PRICES = Array.from({ length: 33 }, (_, i) => 13149 - i);
const BUY = { 13146: 'SLM', 13124: 36, 13123: 55, 13122: 57, 13121: 75, 13120: 82, 13119: 305 };
const SELL = { 13130: 192, 13129: 65, 13128: 50, 13127: 49, 13126: 26, 13125: 2 };
const priceStyle = (p) => {
  if (p === 13142) return { bg: '#98fb98' };
  if (p === 13126) return { bg: '#deb887' };
  if (p === 13125) return { bg: '#fff', fg: '#006428', bold: true, text: '13125' };
  if (p === 13124) return { bg: '#ffff00', fg: '#0a0a96', bold: true, text: '(1) 13124' };
  return { bg: '#fff' };
};

const SpinBox = ({ w, off, value }) => (
  <Spin $w={w} $off={off}>
    <span>{value}</span>
    <SpinBtns><SpinBtn $up /><SpinBtn /></SpinBtns>
  </Spin>
);

const DomPanel = () => (
  <DomWindow>
    <WinTitle>
      <WinName>Sim101</WinName>
      <TagButton>L</TagButton>
      <Caption>
        <CapBtn $w={26}><MinGlyph /></CapBtn>
        <CapBtn $w={25}><MaxGlyph /></CapBtn>
        <CapBtn $w={41} $close>
          <CloseGlyph viewBox="0 0 14 11">
            <path d="M2.5 1.5 L11.5 9.5 M11.5 1.5 L2.5 9.5" stroke="#3a1810" strokeWidth="4" />
            <path d="M2.5 1.5 L11.5 9.5 M11.5 1.5 L2.5 9.5" stroke="#fff" strokeWidth="2.4" />
          </CloseGlyph>
        </CapBtn>
      </Caption>
    </WinTitle>
    <WinBody>
      <LadderWrap>
        <SideCol>
          <WorkingQty><RedMark>×</RedMark><QtyCell>1</QtyCell></WorkingQty>
        </SideCol>
        <Ladder>
          <HeadCell>BUY</HeadCell>
          <HeadCell>PRICE</HeadCell>
          <HeadCell>SELL</HeadCell>
          {PRICES.map((p) => {
            const s = priceStyle(p);
            return (
              <React.Fragment key={p}>
                <Cell $bg={BUY[p] === 'SLM' ? '#e080e8' : '#00f000'} $fg={BUY[p] === 'SLM' ? '#341240' : '#0d4a12'}>{BUY[p]}</Cell>
                <Cell $bg={s.bg} $fg={s.fg} $bold={s.bold}>{s.text || p}</Cell>
                <Cell $bg="#ff0000" $fg="#4a0404">{SELL[p]}</Cell>
              </React.Fragment>
            );
          })}
          <Cell $foot $bg="#00f000" $fg="#0d5a12">BID</Cell>
          <Cell $foot $bg="#000" $fg="#40f040" $bold>$10.00</Cell>
          <Cell $foot $bg="#ff0000" $fg="#5a0404">BID</Cell>
        </Ladder>
      </LadderWrap>
      <ActionRow>
        <RedMark $lh={21}>×</RedMark>
        <ActionBtn $w={18} $ml={7}>&lt;</ActionBtn>
        <ActionBtn $w={58} $ml={6}>REV</ActionBtn>
        <ActionBtn $w={93} $ml={1} $bg="#ff0000" $fg="#f0e8e0">1</ActionBtn>
        <ActionBtn $w={59} $ml={1}>CLOS</ActionBtn>
        <ActionBtn $w={17} $ml={7}>C</ActionBtn>
      </ActionRow>
      <Divider />
      <FormRow $h={21} $mt={5}>
        <FieldLabel $w={70}>strument:</FieldLabel>
        <Combo $w={73}>YM 06-12</Combo>
        <FieldLabel $w={52} $ml={27}>Order qty:</FieldLabel>
        <SpinBox w={63} value="1" />
      </FormRow>
      <FormRow $h={20} $mt={4} $dim>
        <FieldLabel $w={70} $etched>ccount:</FieldLabel>
        <Combo $w={73} $off>Sim101</Combo>
        <FieldLabel $w={53} $ml={27}>TIF:</FieldLabel>
        <Combo $w={62} $glass>Day</Combo>
      </FormRow>
      <FormRow $h={21} $mt={5}>
        <FieldLabel $w={70}>TM Strategy:</FieldLabel>
        <Combo $w={215} $off>&lt;None&gt;</Combo>
      </FormRow>
      <LegendRow>
        <LegendText>ATM Strategy parameters (ticks)</LegendText>
        <LegendRule />
      </LegendRow>
      <ParamsBody>
        <RadioRow>
          <RadioItem><RadioDot $on />1 Target</RadioItem>
          <RadioItem><RadioDot />2 Target</RadioItem>
          <RadioItem><RadioDot />3 Target</RadioItem>
        </RadioRow>
        <FormRow $h={19} $mt={7} $dim>
          <FieldLabel $w={67} $etched>Qty:</FieldLabel>
          <SpinBox w={63} off value="0" />
        </FormRow>
        <FormRow $h={19} $mt={4} $dim>
          <FieldLabel $w={67} $etched>Stop loss:</FieldLabel>
          <SpinBox w={63} off value="0" />
        </FormRow>
        <FormRow $h={19} $mt={3} $dim>
          <FieldLabel $w={67} $etched>Profit target:</FieldLabel>
          <SpinBox w={63} off value="0" />
        </FormRow>
      </ParamsBody>
    </WinBody>
  </DomWindow>
);

export default function App() {
  return (
    <>
      <Global />
      <Page>
        <TitleBar>
          <TitleIcon viewBox="0 0 13 8">
            <rect x="0.5" y="-4" width="12" height="11.5" fill="#dfe8f0" stroke="#50606e" />
            <path d="M2 6 L5 2 L8 4 L11 0" stroke="#2f9a40" fill="none" />
          </TitleIcon>
          <TitleText>{'YM 06-12 (4 Range)  3/30/2012'}</TitleText>
        </TitleBar>
        <Toolbar />
        <ChartRow><Chart /></ChartRow>
        <ScrollRow>
          <ScrollThumb><ThumbMark /><ThumbMark /><ThumbMark /></ScrollThumb>
          <ScrollArrow />
        </ScrollRow>
        <BottomFrame />
        <DomPanel />
      </Page>
    </>
  );
}
